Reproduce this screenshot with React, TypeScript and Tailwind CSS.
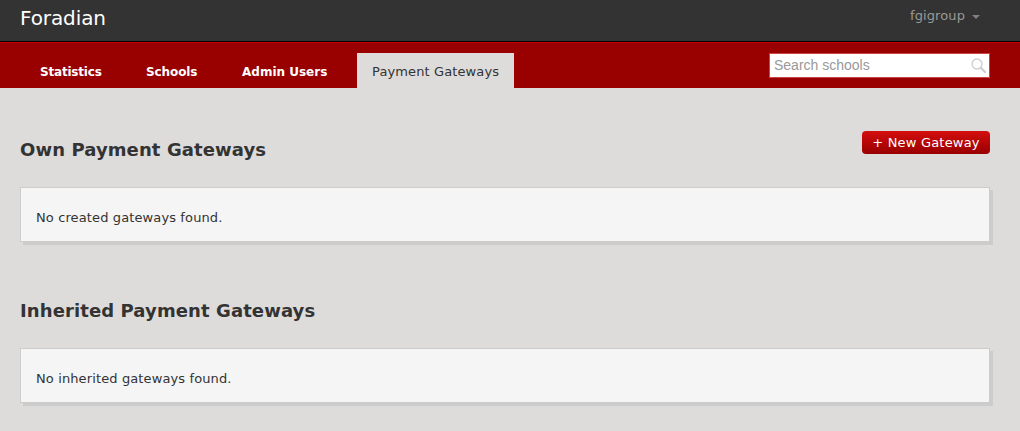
const tabs = [
  { label: "Statistics", width: "w-[106px]", text: "tracking-[-0.2px]" },
  { label: "Schools", width: "w-[96px]", text: "tracking-[-0.1px]" },
  { label: "Admin Users", width: "w-[135px]", text: "" },
];

function Section({ title, message, action }: { title: string; message: string; action?: boolean }) {
  return (
    <section>
      <div className="flex h-[46px] items-center justify-between">
        <h2 className="text-[18px] font-bold leading-[46px] tracking-[0.1px] text-[#333333]">{title}</h2>
        {action && (
          <button className="mb-[15px] flex h-[23px] w-[128px] items-center justify-center rounded-[4px] bg-gradient-to-b from-[#d40f0f] to-[#990000] text-[13px] leading-none tracking-[0.2px] text-white">
            + New Gateway
          </button>
        )}
      </div>
      <div className="mt-[14px] flex h-[55px] items-center border border-[#cccccc] bg-[#f5f5f5] pl-[15px] pt-[6px] text-[13px] tracking-[0.12px] text-[#333333] shadow-[3px_3px_0_#cccccc]">
        {message}
      </div>
    </section>
  );
}

export default function App() {
  return (
    <div className="h-[431px] overflow-hidden bg-[#dedcdb] font-['DejaVu_Sans',sans-serif]">
      <header className="flex h-[42px] items-start justify-between border-b border-b-black bg-[#333333] pl-[20px] pr-[40px]">
        <a className="text-[20px] leading-[36px] tracking-[-0.1px] text-white">Foradian</a>
        <div className="flex items-center gap-[7px] pt-[8px] text-[13px] leading-[16px] tracking-[0.1px] text-[#999999]">
          fgigroup
          <span className="mt-[1px] h-0 w-0 border-x-[4px] border-t-[4px] border-x-transparent border-t-[#808080]" />
        </div>
      </header>
      <nav className="flex h-[46px] items-end justify-between border-t border-t-[#cc0000] bg-[#990000] pl-[20px] pr-[30px]">
        <ul className="flex items-end">
          {tabs.map((tab) => (
            <li key={tab.label} className={`flex h-[35px] items-center pl-[20px] pt-[2px] text-[12px] font-bold text-white ${tab.width}`}>
              <a className={tab.text}>{tab.label}</a>
            </li>
          ))}
          <li className="flex h-[35px] items-center bg-[#dedcdb] px-[15px] pt-[2px] text-[13px] tracking-[0.12px] text-[#333333]">
            Payment Gateways
          </li>
        </ul>
        <div className="mb-[10px] flex h-[25px] w-[221px] items-center justify-between border border-[#cc4444] bg-white pl-[4px] pr-[3px] font-['Liberation_Sans',sans-serif] text-[14px] text-[#999999]">
          Search schools
          <svg width="15" height="15" viewBox="0 0 15 15" fill="none" stroke="#d0d0d0">
            <circle cx="6" cy="6" r="5" strokeWidth="1.4" />
            <path d="M9.8 9.8L14 14" strokeWidth="2.4" strokeLinecap="round" />
          </svg>
        </div>
      </nav>
      <main className="pl-[20px] pr-[30px] pt-[39px]">
        <Section title="Own Payment Gateways" message="No created gateways found." action />
        <div className="mt-[46px]">
          <Section title="Inherited Payment Gateways" message="No inherited gateways found." />
        </div>
      </main>
    </div>
  );
}
